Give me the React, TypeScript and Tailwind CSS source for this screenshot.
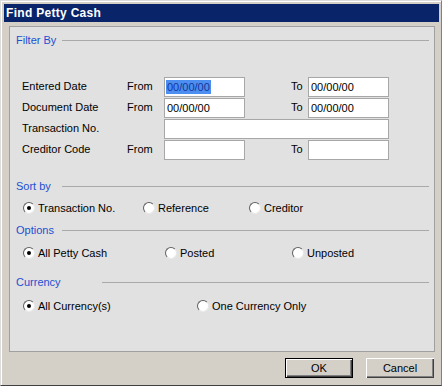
import React from 'react';

const font = { fontFamily: '"Liberation Sans", Arial, sans-serif' };

const Header: React.FC<{ label: string; labelWidth: string }> = ({ label, labelWidth }) => (
    <div className="flex items-center h-[16px] pl-[6px] pr-[5px]">
        <span className={`${labelWidth} text-[#1c4fd2] leading-none`}>{label}</span>
        <div className="flex-1 h-px bg-[#a9a9a9]" />
    </div>
);

const Radio: React.FC<{ label: string; checked?: boolean; width?: string }> = ({ label, checked, width }) => (
    <div className={`flex items-center ${width ?? ''}`}>
        <div className="w-[12px] h-[12px] rounded-full bg-white border border-t-[#5f5f5f] border-l-[#5f5f5f] border-r-[#e8e8e8] border-b-[#e8e8e8] flex items-center justify-center">
            {checked && <div className="w-[4px] h-[4px] rounded-full bg-black" />}
        </div>
        <span className="ml-[3px] leading-none">{label}</span>
    </div>
);

const Field: React.FC<{ value?: string; width: string; selected?: boolean }> = ({ value, width, selected }) => (
    <div className={`${width} h-[20px] bg-white border border-[#a7a7a7] flex items-center pl-[1px]`}>
        {value && (
            <span className={selected ? 'bg-[#4d8ff0] text-[#15359c] px-[1px] leading-[14px]' : 'px-[1px] leading-[14px]'}>
                {value}
            </span>
        )}
    </div>
);

const App: React.FC = () => {
    return (
        <div className="w-[442px] h-[390px] bg-white text-[11px] text-black" style={font}>
            <div className="w-[442px] h-[386px] bg-[#d4d0c8] border border-t-[#dcdcdc] border-l-[#dcdcdc] border-r-[#808080] border-b-[#404040]">
                <div className="h-full border-t border-l border-white pt-[2px] pl-[2px] pr-[2px] flex flex-col">
                    {/* title bar */}
                    <div className="h-[18px] bg-[#0a246a] flex items-center pl-[2px]">
                        <span className="text-white font-bold text-[12px] tracking-[0.3px] leading-none">Find Petty Cash</span>
                    </div>

                    {/* main panel */}
                    <div className="mt-[4px] ml-[5px] mr-[4px] h-[326px] bg-[#e1e1e1] border border-[#a0a0a0] flex flex-col">
                        <div className="mt-[5px]">
                            <Header label="Filter By" labelWidth="w-[46px]" />
                        </div>

                        <div className="mt-[28px] flex flex-col pl-[12px]">
                            <div className="flex items-center h-[21px]">
                                <span className="w-[105px]">Entered Date</span>
                                <span className="w-[37px]">From</span>
                                <Field width="w-[81px]" value="00/00/00" selected />
                                <span className="w-[46px]" />
                                <span className="w-[17px]">To</span>
                                <Field width="w-[81px]" value="00/00/00" />
                            </div>
                            <div className="flex items-center h-[21px]">
                                <span className="w-[105px]">Document Date</span>
                                <span className="w-[37px]">From</span>
                                <Field width="w-[81px]" value="00/00/00" />
                                <span className="w-[46px]" />
                                <span className="w-[17px]">To</span>
                                <Field width="w-[81px]" value="00/00/00" />
                            </div>
                            <div className="flex items-center h-[21px]">
                                <span className="w-[142px]">Transaction No.</span>
                                <Field width="w-[225px]" />
                            </div>
                            <div className="flex items-center h-[21px]">
                                <span className="w-[105px]">Creditor Code</span>
                                <span className="w-[37px]">From</span>
                                <Field width="w-[81px]" />
                                <span className="w-[46px]" />
                                <span className="w-[17px]">To</span>
                                <Field width="w-[81px]" />
                            </div>
                        </div>

                        <div className="mt-[18px]">
                            <Header label="Sort by" labelWidth="w-[46px]" />
                        </div>
                        <div className="mt-[4px] h-[20px] flex items-center pl-[13px]">
                            <Radio label="Transaction No." checked width="w-[120px]" />
                            <Radio label="Reference" width="w-[106px]" />
                            <Radio label="Creditor" />
                        </div>

                        <div className="mt-[4px]">
                            <Header label="Options" labelWidth="w-[46px]" />
                        </div>
                        <div className="mt-[5px] h-[20px] flex items-center pl-[13px]">
                            <Radio label="All Petty Cash" checked width="w-[142px]" />
                            <Radio label="Posted" width="w-[127px]" />
                            <Radio label="Unposted" />
                        </div>

                        <div className="mt-[11px]">
                            <Header label="Currency" labelWidth="w-[86px]" />
                        </div>
                        <div className="mt-[6px] h-[20px] flex items-center pl-[13px]">
                            <Radio label="All Currency(s)" checked width="w-[174px]" />
                            <Radio label="One Currency Only" />
                        </div>
                    </div>

                    {/* buttons */}
                    <div className="mt-[6px] mr-[5px] flex justify-end gap-[13px]">
                        <div className="w-[68px] h-[20px] border border-black">
                            <div className="w-full h-full flex items-center justify-center bg-[#d4d0c8] shadow-[inset_1px_1px_0_#ffffff,inset_-1px_-1px_0_#404040,inset_-2px_-2px_0_#808080]">
                                OK
                            </div>
                        </div>
                        <div className="w-[68px] h-[20px] flex items-center justify-center bg-[#d4d0c8] shadow-[inset_1px_1px_0_#ffffff,inset_-1px_-1px_0_#404040,inset_-2px_-2px_0_#808080]">
                            Cancel
                        </div>
                    </div>
                </div>
            </div>
        </div>
    );
};

export default App;
